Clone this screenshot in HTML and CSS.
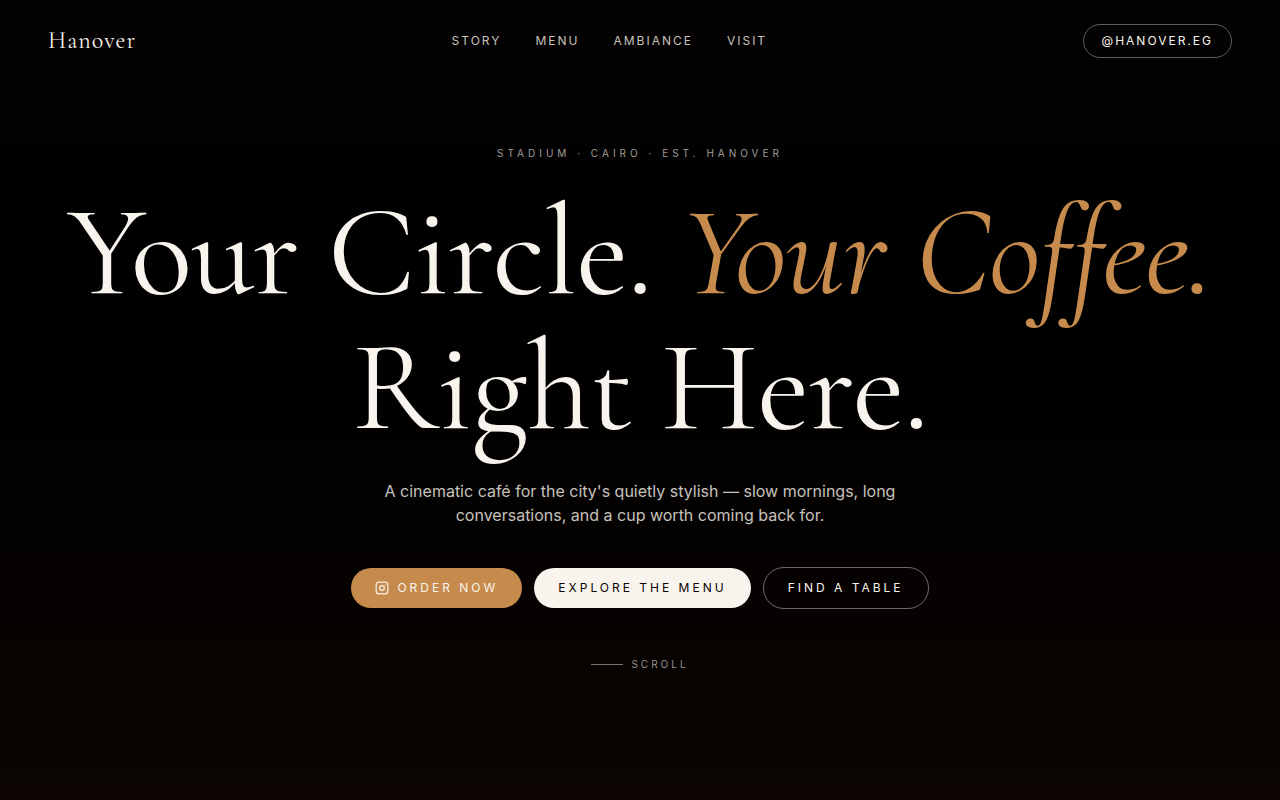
FILE: index.html
```html
<!DOCTYPE html>
<html lang="en">
<head>
<meta charset="UTF-8">
<meta name="viewport" content="width=device-width, initial-scale=1.0">
<title>Hanover</title>
<link rel="stylesheet" href="styles.css">
</head>
<body>
<header class="nav">
    <a class="logo" href="#top">Hanover</a>
    <nav class="links">
        <a href="#story">Story</a>
        <a href="#menu">Menu</a>
        <a href="#ambiance">Ambiance</a>
        <a href="#visit">Visit</a>
    </nav>
    <a class="handle" href="#instagram">@hanover.eg</a>
</header>

<main class="hero" id="top">
    <p class="eyebrow">Stadium · Cairo · Est. Hanover</p>
    <h1>Your Circle. <em>Your Coffee.</em> Right Here.</h1>
    <p class="lead">A cinematic café for the city's quietly stylish — slow mornings, long conversations, and a cup worth coming back for.</p>
    <div class="actions">
        <a class="btn order" href="#order">
            <svg width="14" height="14" viewBox="0 0 24 24" fill="none" stroke="currentColor" stroke-width="2" stroke-linecap="round" stroke-linejoin="round" aria-hidden="true">
                <rect x="2" y="2" width="20" height="20" rx="5"/>
                <circle cx="12" cy="12" r="4"/>
                <path d="M17.5 6.5h.01"/>
            </svg>
            Order Now
        </a>
        <a class="btn explore" href="#menu">Explore the Menu</a>
        <a class="btn table" href="#visit">Find a Table</a>
    </div>
    <a class="scroll" href="#story">Scroll</a>
</main>
</body>
</html>
```
FILE: styles.css
```css
* {
    box-sizing: border-box;
}
body {
    margin: 0;
    min-height: 100vh;
    background: linear-gradient(#040202, #000 40%, #050201 75%, #0c0502);
    color: #f8f3ec;
    font-family: Inter, sans-serif;
}
a {
    color: inherit;
    text-decoration: none;
}
.nav {
    display: flex;
    align-items: center;
    justify-content: space-between;
    padding: 24px 48px;
}
.logo {
    font-family: "Cormorant Garamond", Cormorant, "Liberation Serif", serif;
    font-size: 24px;
    font-weight: 400;
    line-height: 32px;
    letter-spacing: 1px;
}
.links {
    display: flex;
    gap: 34px;
    font-size: 12px;
    line-height: 16px;
    letter-spacing: 2px;
    text-transform: uppercase;
    color: #c6c2bc;
}
.handle {
    padding: 8px 18px;
    border: 1px solid #5e5c59;
    border-radius: 20px;
    font-size: 12px;
    line-height: 16px;
    letter-spacing: 2px;
    text-transform: uppercase;
}
.hero {
    display: flex;
    flex-direction: column;
    align-items: center;
    padding: 64px 24px;
    text-align: center;
}
.eyebrow {
    margin: 0 0 24px;
    font-size: 10px;
    line-height: 15px;
    letter-spacing: 4px;
    text-transform: uppercase;
    color: #a09c97;
}
h1 {
    margin: 0;
    font-family: "Cormorant Garamond", Cormorant, "Liberation Serif", serif;
    font-size: 128px;
    font-weight: 400;
    line-height: 135px;
    letter-spacing: -1px;
}
h1 em {
    color: #c68b4c;
}
.lead {
    max-width: 576px;
    margin: 24px 0 40px;
    font-size: 16px;
    line-height: 24px;
    color: #c6c2bc;
}
.actions {
    display: flex;
    align-items: center;
    gap: 12px;
}
.btn {
    display: flex;
    align-items: center;
    gap: 8px;
    padding: 12px 24px;
    border-radius: 24px;
    font-size: 12px;
    line-height: 16px;
    letter-spacing: 3px;
    text-transform: uppercase;
}
.order {
    background: #c68b4c;
}
.explore {
    background: #f8f3ec;
    color: #0c0402;
}
.table {
    border: 1px solid #6b6865;
}
.scroll {
    display: flex;
    align-items: center;
    gap: 8px;
    margin-top: 48px;
    font-size: 10px;
    line-height: 15px;
    letter-spacing: 3px;
    text-transform: uppercase;
    color: #96938e;
}
.scroll::before {
    content: "";
    width: 32px;
    height: 1px;
    background: #76726e;
}
```
